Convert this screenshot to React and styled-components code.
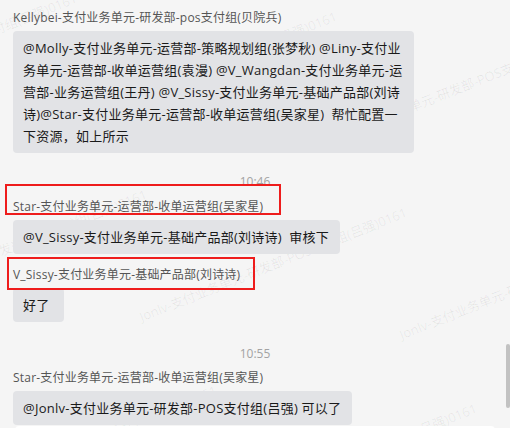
import React from 'react';
import styled, { createGlobalStyle } from 'styled-components';

const WATERMARK = 'Jonlv-支付业务单元-研发部-POS支付组(吕强)0161';

const GlobalStyle = createGlobalStyle`
  html, body {
    margin: 0;
    padding: 0;
    background: #f5f5f5;
  }
  body {
    font-family: "Open Sans", "Noto Sans CJK SC", sans-serif;
  }
`;

const App = () => {
  // watermark tiles sit on a slanted lattice
  const marks = [];
  for (let i = -2; i <= 2; i++) {
    for (let j = -2; j <= 1; j++) {
      marks.push({ key: `${i}_${j}`, x: 140 + 260 * i + 70 * j, y: 317 + 18 * i + 196 * j });
    }
  }

  return (
    <Page>
      <GlobalStyle />
      <WatermarkLayer>
        {marks.map((m) => (
          <WatermarkText key={m.key} style={{ left: m.x, top: m.y - 9 }}>
            {WATERMARK}
          </WatermarkText>
        ))}
      </WatermarkLayer>

      <Feed>
        <Group>
          <Name>Kellybei-支付业务单元-研发部-pos支付组(贝院兵)</Name>
          <Bubble>
            {'@Molly-支付业务单元-运营部-策略规划组(张梦秋) @Liny-支付业\n'}
            {'务单元-运营部-收单运营组(袁漫) @V_Wangdan-支付业务单元-运\n'}
            {'营部-业务运营组(王丹) @V_Sissy-支付业务单元-基础产品部(刘诗\n'}
            {'诗)@Star-支付业务单元-运营部-收单运营组(吴家星)\u00a0\u00a0帮忙配置一\n'}
            {'下资源，如上所示'}
          </Bubble>
        </Group>

        <Time $top={19} $bottom={5}>10:46</Time>

        <Group>
          <NameWrap>
            <Name>Star-支付业务单元-运营部-收单运营组(吴家星)</Name>
            <Mark $top={-13} $left={-8} $w={276} $h={31} />
          </NameWrap>
          <Bubble>{'@V_Sissy-支付业务单元-基础产品部(刘诗诗)\u00a0\u00a0审核下'}</Bubble>
        </Group>

        <Group $gap={11}>
          <NameWrap>
            <Name>V_Sissy-支付业务单元-基础产品部(刘诗诗)</Name>
            <Mark $top={-8} $left={-6} $w={248} $h={33} />
          </NameWrap>
          <Bubble>好了</Bubble>
        </Group>

        <Time $top={22} $bottom={4}>10:55</Time>

        <Group>
          <Name>Star-支付业务单元-运营部-收单运营组(吴家星)</Name>
          <Bubble>{'@Jonlv-支付业务单元-研发部-POS支付组(吕强) 可以了'}</Bubble>
        </Group>

        <Card />
      </Feed>

      <ScrollThumb />
    </Page>
  );
};

const Page = styled.div`
  position: relative;
  width: 510px;
  height: 428px;
  overflow: hidden;
  background: #f5f5f5;
`;

const WatermarkLayer = styled.div`
  position: absolute;
  inset: 0;
  z-index: 0;
  pointer-events: none;
  overflow: hidden;
`;

const WatermarkText = styled.span`
  position: absolute;
  white-space: nowrap;
  font-size: 13px;
  line-height: 18px;
  color: rgba(0, 0, 0, 0.065);
  transform-origin: 0 50%;
  transform: rotate(-21.6deg);
`;

const Feed = styled.div`
  position: relative;
  z-index: 1;
  display: flex;
  flex-direction: column;
  align-items: flex-start;
  padding: 8px 13px 0;
`;

const Group = styled.div`
  display: flex;
  flex-direction: column;
  align-items: flex-start;
  margin-top: ${(p) => p.$gap || 0}px;
`;

const NameWrap = styled.div`
  position: relative;
`;

const Name = styled.div`
  font-size: 12px;
  line-height: 20px;
  letter-spacing: 0.2px;
  color: #555;
  white-space: nowrap;
  margin-bottom: 3px;
`;

const Mark = styled.span`
  position: absolute;
  top: ${(p) => p.$top}px;
  left: ${(p) => p.$left}px;
  width: ${(p) => p.$w}px;
  height: ${(p) => p.$h}px;
  border: 2px solid #ee1c1c;
  box-sizing: border-box;
  pointer-events: none;
`;

const Bubble = styled.div`
  box-sizing: border-box;
  min-width: 51px;
  padding: 6px 11px 6px 10px;
  background: #e2e3e6;
  border-radius: 4px;
  font-size: 13px;
  line-height: 22px;
  letter-spacing: 0.25px;
  color: #1a1a1a;
  white-space: pre;
`;

const Time = styled.div`
  align-self: stretch;
  text-align: center;
  font-size: 12px;
  line-height: 20px;
  color: #a3a3a3;
  margin: ${(p) => p.$top}px 0 ${(p) => p.$bottom}px;
`;

const Card = styled.div`
  width: 480px;
  height: 24px;
  margin: 1px 0 0 2px;
  background: #fff;
  border-radius: 4px;
`;

const ScrollThumb = styled.div`
  position: absolute;
  right: 0;
  top: 344px;
  width: 4px;
  height: 64px;
  background: #c2c2c2;
  border-radius: 2px;
  z-index: 2;
`;

export default App;
